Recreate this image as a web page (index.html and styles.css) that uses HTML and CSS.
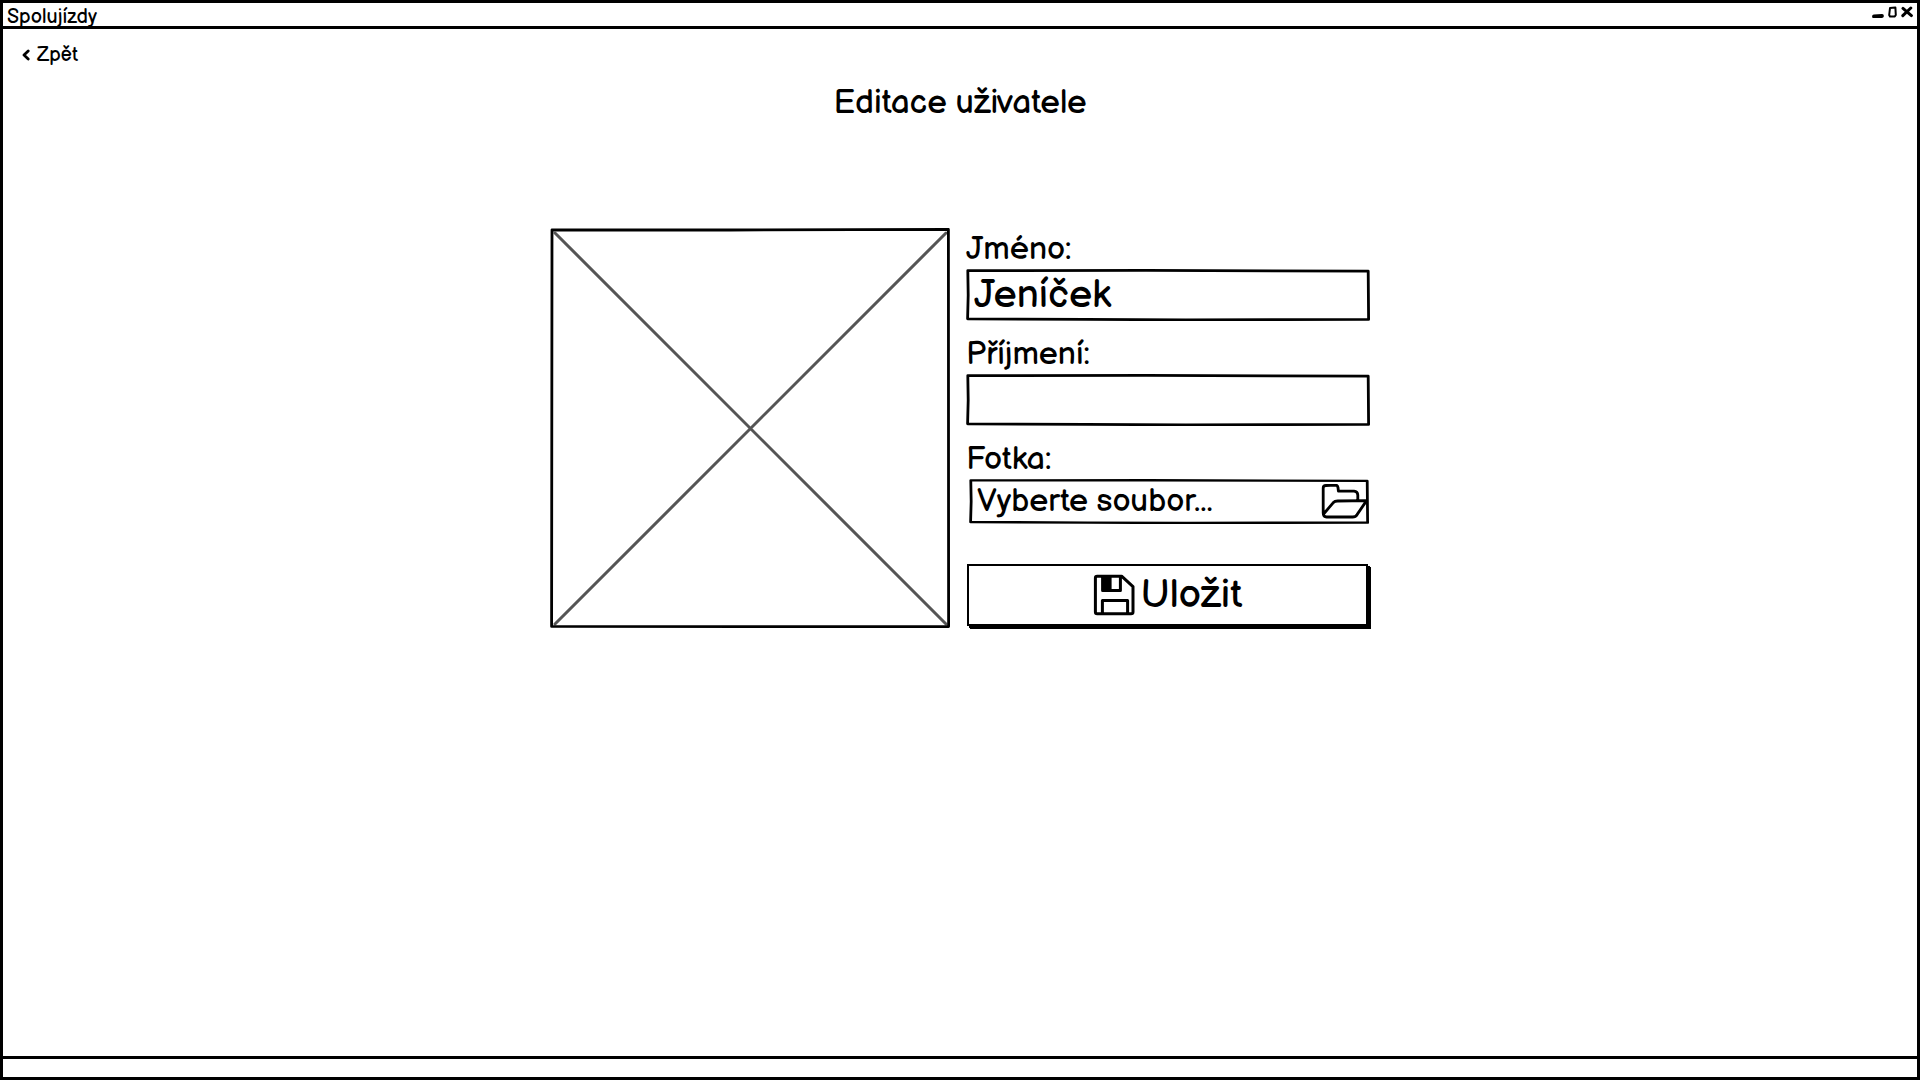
FILE: index.html
```html
<!DOCTYPE html>
<html lang="cs">
<head>
  <meta charset="utf-8">
  <meta name="viewport" content="width=device-width, initial-scale=1">
  <title>Spolujízdy</title>
  <link rel="stylesheet" href="styles.css">
</head>
<body>
  <div class="window">
    <header class="titlebar">
      <span class="titlebar-name">Spolujízdy</span>
      <div class="controls">
        <button type="button" class="control" aria-label="Minimalizovat">
          <svg width="12" height="12" viewBox="0 0 12 12"><path d="M2 10.4 10 10" stroke-width="3.8"/></svg>
        </button>
        <button type="button" class="control control-narrow" aria-label="Maximalizovat">
          <svg width="9" height="12" viewBox="0 0 9 12"><path d="M2 2 7.4 1.6 7.8 9 6.8 10.4 2 10.6 1.2 9Z" stroke-width="2"/></svg>
        </button>
        <button type="button" class="control" aria-label="Zavřít">
          <svg width="12" height="12" viewBox="0 0 12 12"><path d="M2 2.4 10.4 9.6M9.8 2 1.8 9.6" stroke-width="3"/></svg>
        </button>
      </div>
    </header>

    <main class="content">
      <a class="back" href="#">
        <svg width="8" height="12" viewBox="0 0 8 12"><path d="M6.2 2 2 6 6.2 10" stroke-width="2.8"/></svg>
        Zpět
      </a>
      <h1 class="heading">Editace uživatele</h1>

      <form class="editor">
        <svg class="photo" viewBox="0 0 400 400" role="img" aria-label="Fotka uživatele">
          <path class="photo-cross" d="M5 5 396 396M396 5 5 396"/>
          <path class="photo-frame" d="M2 1.8 180 2 398.4 1.4 398.6 398.6 200 398.6 1.6 398.4Z"/>
        </svg>

        <div class="fields">
          <div class="field">
            <label for="first-name">Jméno:</label>
            <input class="text-input" id="first-name" type="text" value="Jeníček">
          </div>
          <div class="field">
            <label for="last-name">Příjmení:</label>
            <input class="text-input" id="last-name" type="text">
          </div>
          <div class="field">
            <label for="photo-file">Fotka:</label>
            <div class="file-picker">
              <span>Vyberte soubor...</span>
              <svg width="48" height="36" viewBox="0 0 48 36"><path d="M2.2 29V4Q2.2 1.6 5 1.5L14.1 1Q16.6 1 17 3.5L17.4 7.2 33.1 7.2Q36.6 7.4 36.8 11V16.5M2.6 30 12.1 18.8Q13.8 17 16.6 17L45.6 16.6 36.2 30.4Q34.6 33 31.6 33L5.6 33Q2.2 33 2.2 29" stroke-width="2.8"/></svg>
              <input class="file-input" id="photo-file" type="file">
            </div>
          </div>
          <button class="save" type="submit">
            <svg width="42" height="42" viewBox="0 0 42 42"><path d="M2.4 4Q2.4 2.2 4.2 2.2H28.6L40 12.6V38Q40 39.8 38 39.8H4.2Q2.4 39.8 2.4 38ZM9.6 2.4V16.4H27.4V2.4M9.4 39V26.4H34.6V39" stroke-width="3"/><path class="solid" d="M9 3H18.6V16H9Z"/></svg>
            Uložit
          </button>
        </div>
      </form>
    </main>

    <footer class="statusbar"></footer>
  </div>
</body>
</html>
```

FILE: styles.css
```css
* {
  box-sizing: border-box;
}

body {
  margin: 0;
  background: #fff;
  color: #000;
  font-family: "Balsamiq Sans", Lato, sans-serif;
  font-size: 20px;
}

button,
input {
  padding: 0;
  border: 0;
  background: none;
  color: inherit;
  font: inherit;
}

svg {
  display: block;
  flex: none;
  fill: none;
  stroke: #000;
  stroke-linecap: round;
  stroke-linejoin: round;
}

.window {
  display: flex;
  flex-direction: column;
  min-height: 100vh;
  border: 3px solid #000;
}

.titlebar {
  display: flex;
  justify-content: space-between;
  height: 26px;
  padding: 0 4px;
  border-bottom: 3px solid #000;
  line-height: 28px;
}

.controls {
  display: flex;
  gap: 4px;
  padding-top: 3px;
}

.control {
  width: 12px;
  height: 12px;
}

.control-narrow {
  width: 9px;
}

.content {
  flex: 1;
  padding: 16px 19px;
}

.back {
  display: flex;
  align-items: center;
  gap: 7px;
  width: fit-content;
  color: inherit;
  line-height: 20px;
  text-decoration: none;
}

.heading {
  margin: 14px 0 101px;
  font-size: 33px;
  font-weight: 400;
  line-height: 48px;
  text-align: center;
}

.editor {
  display: grid;
  grid-template-columns: 400fr 404fr;
  gap: 16px;
  align-items: start;
  max-width: 820px;
  margin: 0 auto;
}

.photo {
  width: 100%;
}

.photo-frame {
  stroke-width: 2.8;
}

.photo-cross {
  stroke: #555;
  stroke-width: 3;
}

.fields {
  display: flex;
  flex-direction: column;
  gap: 12px;
}

.field {
  display: flex;
  flex-direction: column;
}

.field label {
  padding-top: 3px;
  font-size: 32px;
  line-height: 38px;
}

.text-input,
.file-picker {
  width: 100%;
  height: 52px;
  padding: 0 8px;
  background: url("data:image/svg+xml,%3Csvg xmlns='http://www.w3.org/2000/svg' viewBox='0 0 404 52' preserveAspectRatio='none'%3E%3Cpath d='M1.8 1.6 180 1.4 402.2 2.2 402.6 50.4 220 50.8 120 50.4 1.6 49.8 2.2 26Z' fill='none' stroke='%23000' stroke-width='2.8' stroke-linejoin='round'/%3E%3C/svg%3E") center / 100% 100% no-repeat;
}

.text-input {
  font-size: 39px;
}

.file-picker {
  position: relative;
  display: flex;
  align-items: center;
  justify-content: space-between;
  width: auto;
  height: 45px;
  margin: 0 1px 0 3px;
  padding: 0 0 0 8px;
  font-size: 32px;
}

.file-input {
  position: absolute;
  inset: 0;
  width: 100%;
  opacity: 0;
  cursor: pointer;
}

.save {
  display: flex;
  align-items: center;
  justify-content: center;
  gap: 6px;
  height: 62px;
  margin: 28px 2px 0 1px;
  border: 2px solid #000;
  box-shadow: 2px 2px 0 #000, 3px 3px 0 #000;
  font-size: 40px;
}

.solid {
  fill: #000;
  stroke: none;
}

.statusbar {
  height: 21px;
  border-top: 3px solid #000;
}
```
